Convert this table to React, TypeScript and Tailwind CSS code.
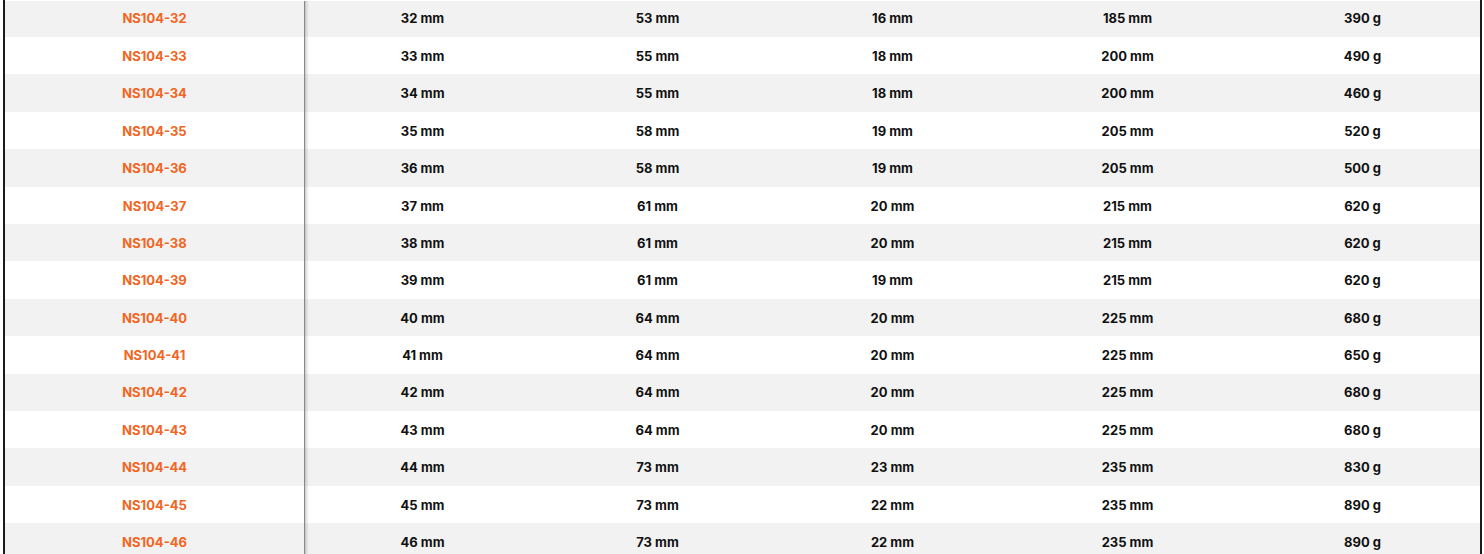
const rows: [string, string, string, string, string, string][] = [
  ["NS104-32", "32 mm", "53 mm", "16 mm", "185 mm", "390 g"],
  ["NS104-33", "33 mm", "55 mm", "18 mm", "200 mm", "490 g"],
  ["NS104-34", "34 mm", "55 mm", "18 mm", "200 mm", "460 g"],
  ["NS104-35", "35 mm", "58 mm", "19 mm", "205 mm", "520 g"],
  ["NS104-36", "36 mm", "58 mm", "19 mm", "205 mm", "500 g"],
  ["NS104-37", "37 mm", "61 mm", "20 mm", "215 mm", "620 g"],
  ["NS104-38", "38 mm", "61 mm", "20 mm", "215 mm", "620 g"],
  ["NS104-39", "39 mm", "61 mm", "19 mm", "215 mm", "620 g"],
  ["NS104-40", "40 mm", "64 mm", "20 mm", "225 mm", "680 g"],
  ["NS104-41", "41 mm", "64 mm", "20 mm", "225 mm", "650 g"],
  ["NS104-42", "42 mm", "64 mm", "20 mm", "225 mm", "680 g"],
  ["NS104-43", "43 mm", "64 mm", "20 mm", "225 mm", "680 g"],
  ["NS104-44", "44 mm", "73 mm", "23 mm", "235 mm", "830 g"],
  ["NS104-45", "45 mm", "73 mm", "22 mm", "235 mm", "890 g"],
  ["NS104-46", "46 mm", "73 mm", "22 mm", "235 mm", "890 g"],
];

export default function App() {
  return (
    <div className="w-[1484px] h-[554px] overflow-hidden bg-white font-['Inter',sans-serif]">
      <div className="ml-[3px] w-[1479px] border-l-2 border-r-2 border-[#1a1a1a] pt-px">
        {rows.map((r, i) => {
          const nudge = i === 0 ? "" : "pt-[2px]";
          return (
            <div
              key={r[0]}
              className={`flex ${i === 0 ? "h-[36px]" : "h-[37.4px]"} ${
                i % 2 === 0 ? "bg-[#f2f2f2]" : "bg-white"
              } text-[13px] font-bold`}
            >
              <div
                className={`relative z-10 w-[300px] flex items-center justify-center text-[#f26522] border-r border-[#b5b5b5] ${nudge}`}
              >
                {r[0]}
                {/* shadow strip right of the first column */}
                <span className="absolute top-0 bottom-0 left-full w-[5px] bg-[linear-gradient(to_right,rgba(0,0,0,0.28),rgba(0,0,0,0.1),rgba(0,0,0,0))]" />
              </div>
              {r.slice(1).map((c, j) => (
                <div
                  key={j}
                  className={`flex-1 flex items-center justify-center text-[#111] ${nudge}`}
                >
                  {c}
                </div>
              ))}
            </div>
          );
        })}
      </div>
    </div>
  );
}
